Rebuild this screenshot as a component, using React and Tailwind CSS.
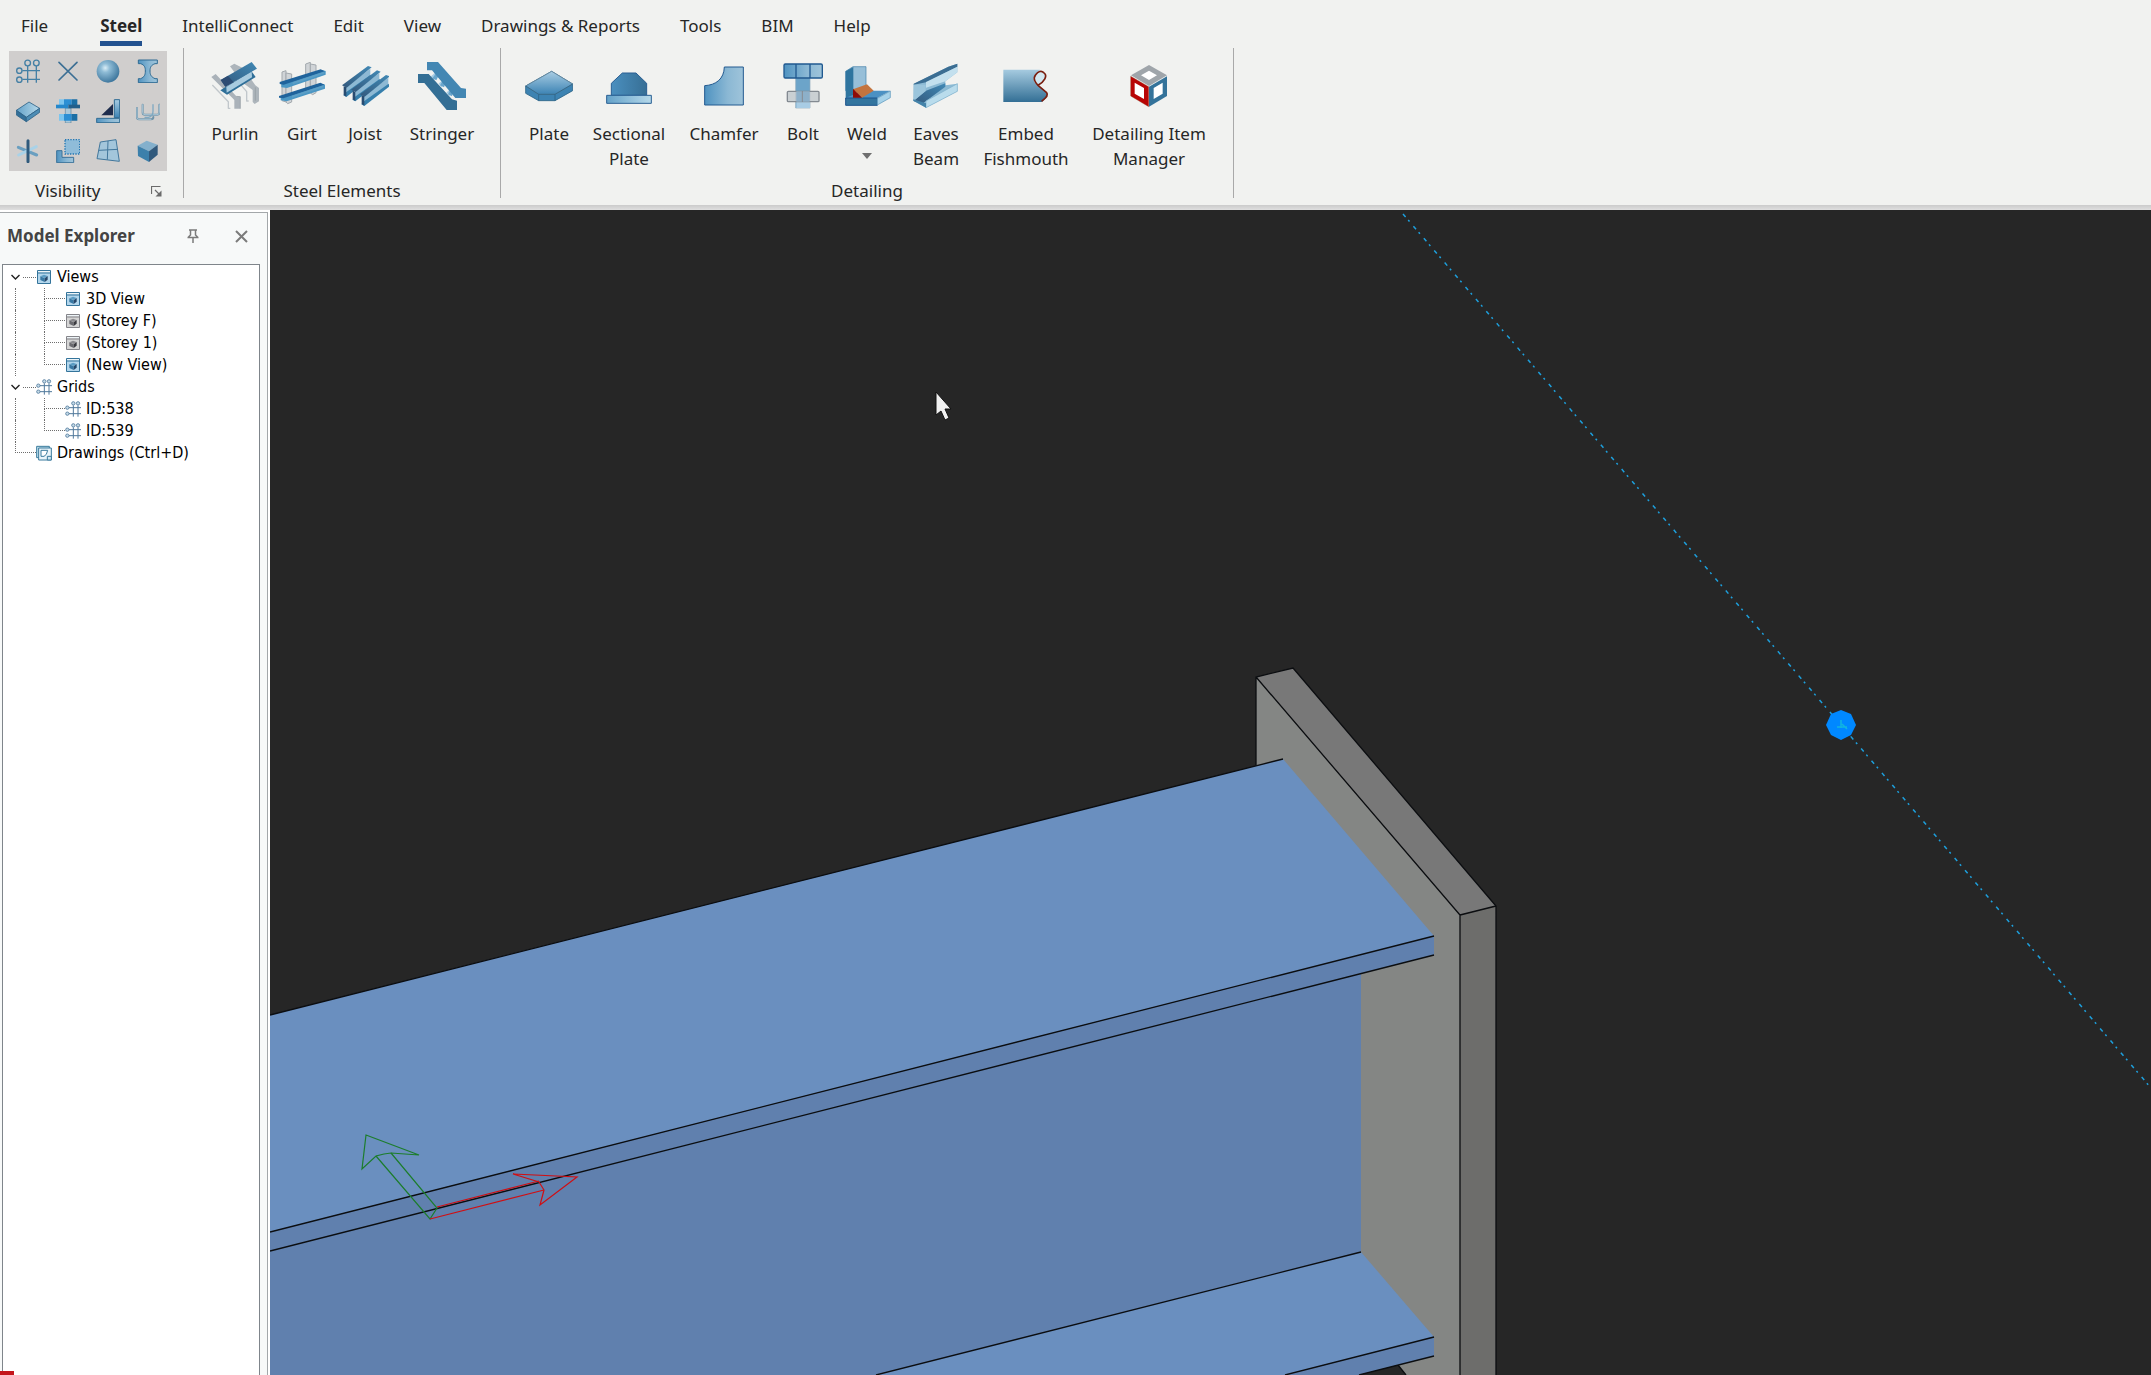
import React, { useState } from "react";

const UI_FONT = "font-['Noto_Sans','Open_Sans',sans-serif]";
const TREE_FONT = "font-['DejaVu_Sans_Condensed','Noto_Sans',sans-serif]";

function Gradients() {
  return (
    <svg width="0" height="0" className="absolute" aria-hidden="true">
      <defs>
        <linearGradient id="gDown" x1="0" y1="0" x2="0" y2="1">
          <stop offset="0" stopColor="#a9cde3" />
          <stop offset="1" stopColor="#3c83b4" />
        </linearGradient>
        <linearGradient id="gDeep" x1="0" y1="0" x2="0" y2="1">
          <stop offset="0" stopColor="#a6cbe0" />
          <stop offset="1" stopColor="#336f95" />
        </linearGradient>
        <linearGradient id="gLight" x1="0" y1="0" x2="1" y2="0">
          <stop offset="0" stopColor="#4f93c1" />
          <stop offset="0.6" stopColor="#8bb8d4" />
          <stop offset="1" stopColor="#9fc4da" />
        </linearGradient>
        <linearGradient id="gDark" x1="0" y1="0" x2="1" y2="0">
          <stop offset="0" stopColor="#4a8fbf" />
          <stop offset="1" stopColor="#376f95" />
        </linearGradient>
        <linearGradient id="gBeam" x1="0" y1="1" x2="1" y2="0">
          <stop offset="0" stopColor="#33597d" />
          <stop offset="1" stopColor="#4189b5" />
        </linearGradient>
        <linearGradient id="gPale" x1="0" y1="0" x2="1" y2="0">
          <stop offset="0" stopColor="#64a2c9" />
          <stop offset="1" stopColor="#b6d9ea" />
        </linearGradient>
        <radialGradient id="gBall" cx="0.38" cy="0.35" r="0.65">
          <stop offset="0" stopColor="#d9edf6" />
          <stop offset="0.3" stopColor="#8fbcd6" />
          <stop offset="1" stopColor="#41799f" />
        </radialGradient>
      </defs>
    </svg>
  );
}

function Icon({ box, className = "size-12", children }) {
  return (
    <svg viewBox={box} className={className} aria-hidden="true" strokeLinejoin="round">
      {children}
    </svg>
  );
}

/* ---------- visibility icons ---------- */

const visibilityIcons = [
  {
    name: "Grids",
    box: "48 41 72 72",
    art: (
      <g fill="none" stroke="#4580a5" strokeWidth="4">
        <circle cx="83" cy="53" r="8.500" />
        <circle cx="109" cy="53" r="8.500" />
        <circle cx="58" cy="76" r="8" />
        <circle cx="58" cy="103" r="8" />
        <path d="M83 62v50M109 62v50M67 76h53M67 102h53" />
      </g>
    ),
  },
  {
    name: "Points",
    box: "168 41 72 72",
    art: <path d="M177 51l54 53M231 51l-54 53" fill="none" stroke="#3c6f94" strokeWidth="5" strokeLinecap="round" />,
  },
  { name: "Solids", box: "288 41 72 72", art: <circle cx="324" cy="78" r="34" fill="url(#gBall)" /> },
  {
    name: "Sections",
    box: "411 41 72 72",
    art: (
      <path
        d="M418 44h57v11h-7c-11 4-15 10-15 22s4 18 15 23h7v12h-57v-12h7c11-5 14-11 14-23s-3-18-14-22h-7z"
        fill="url(#gLight)"
        stroke="#2f6b93"
        strokeWidth="3"
      />
    ),
  },
  {
    name: "Plates",
    box: "48 161 72 72",
    art: (
      <g stroke="#2f6387" strokeWidth="2.500">
        <path d="M49 195l38-25 32 19-40 27z" fill="url(#gPale)" />
        <path d="M49 195l30 21v13l-30-20z" fill="#33709a" />
        <path d="M79 216l40-27v12l-40 28z" fill="#4d8db5" />
      </g>
    ),
  },
  {
    name: "Bolts",
    box: "168 161 72 72",
    art: (
      <g>
        <path d="M196 188h17v45h-17z" fill="#a9c8da" stroke="#5f879f" strokeWidth="2" />
        <path d="M177 162h15v17h-15zM177 206h15v20h-15z" fill="#7cc5ee" />
        <path d="M192 162h23v17h-23zM192 206h23v20h-23z" fill="#2b8fd4" />
        <path d="M215 162h17v17h-17zM215 206h17v20h-17z" fill="#1b6fa5" />
        <path d="M168 178h37v11h-37z" fill="#2588cc" />
        <path d="M205 178h35v11h-35z" fill="#235f8a" />
      </g>
    ),
  },
  {
    name: "Welds",
    box: "288 161 72 72",
    art: (
      <g>
        <path d="M343 163h16v54h-16z" fill="url(#gDown)" stroke="#2f6b93" strokeWidth="3" />
        <path d="M290 219h69v13h-69z" fill="url(#gLight)" stroke="#2f6b93" strokeWidth="3" />
        <path d="M339 176v34h-35z" fill="#1f2d4d" />
      </g>
    ),
  },
  {
    name: "Connections",
    box: "408 161 72 72",
    art: (
      <g fill="none" strokeLinecap="round" strokeLinejoin="round">
        <path d="M411 188v28q0 6 6 6h36q7 0 7-6v-1" stroke="#6f93a9" strokeWidth="6" />
        <path d="M428 178v24q0 6 7 6h36q7 0 7-6v-24" stroke="#6f93a9" strokeWidth="6" />
        <path d="M411 188v28q0 6 6 6h36M428 178v24q0 6 7 6h36q7 0 7-6v-24" stroke="#b5d0de" strokeWidth="2.500" />
        <path d="M459 178v20q0 16-14 18h-10" stroke="#7fa9c2" strokeWidth="4" />
      </g>
    ),
  },
  {
    name: "Axes",
    box: "48 281 72 72",
    art: (
      <g strokeLinecap="round" strokeWidth="9">
        <path d="M55 306l55 23" stroke="#6a9fc0" />
        <path d="M56 329l53-25" stroke="#a9d2e8" />
        <path d="M84 286v63" stroke="#2f5a7c" />
      </g>
    ),
  },
  {
    name: "Clipping",
    box: "168 281 72 72",
    art: (
      <g>
        <path d="M195 283h44v43h-44z" fill="#8fbcd9" stroke="#2377b3" strokeWidth="4" strokeDasharray="4 4" />
        <path d="M170 316h16v20h35v16h-51z" fill="url(#gLight)" stroke="#3b7299" strokeWidth="3" />
      </g>
    ),
  },
  {
    name: "Work planes",
    box: "288 281 72 72",
    art: (
      <g stroke="#42779c" strokeWidth="3">
        <path d="M301 290l47-7 10 65-67-8z" fill="#a3c6db" />
        <path d="M324 287l-2 56M296 315l58-3" fill="none" />
      </g>
    ),
  },
  {
    name: "Blocks",
    box: "411 281 72 72",
    art: (
      <g>
        <path d="M416 301l27-15 33 12-26 20z" fill="#84b0cc" />
        <path d="M416 301l34 17v32l-33-18z" fill="#3c80ab" />
        <path d="M450 318l26-20v30l-26 22z" fill="#31597c" />
      </g>
    ),
  },
];

/* ---------- ribbon commands ---------- */

const steelElements = [
  {
    label: ["Purlin"],
    width: "w-[68px]",
    box: "33 36 144 144",
    art: (
      <g>
        <path d="M34 81l13-9 62 67 12 1v36h-18v-26l-5-5z" fill="#aab2b9" />
        <path d="M90 49l13-8 27 14 36 51 11 8v40l-13 8-6-6v-36L125 96z" fill="#adb5bb" />
        <path d="M37 105l48 50v20h6M104 83l36 42v28h6" fill="none" stroke="#c1c7cb" strokeWidth="4" />
        <path d="M109 139l12 1v36M166 112v40" fill="none" stroke="#8f989f" strokeWidth="2" />
        <path d="M61 121l93-58 13 18-86 53z" fill="#2f6f98" />
        <path d="M79 111l76-48 1 19-76 46z" fill="#a9cbdf" />
        <path d="M62 90l93-54 16 20-95 54z" fill="url(#gBeam)" />
        <path d="M62 90l22-13 17 20-25 13z" fill="#2d4c73" />
      </g>
    ),
  },
  {
    label: ["Girt"],
    width: "w-[66px]",
    box: "234 36 144 144",
    art: (
      <g>
        <g fill="#d0d4d7" stroke="#a3a9ae" strokeWidth="3">
          <path d="M246 66l12-4v94l-12-4z" />
          <path d="M258 69l17 3v84l-12 5-5-5z" />
          <path d="M317 42l14-5v92l-14-4z" />
          <path d="M331 42l17 3v83l-10 6-7-5z" />
        </g>
        <path d="M244 102l122-42 11 3v11l-116 40-17-2z" fill="#4b97c4" />
        <path d="M239 96l123-38 12 6-123 40-12-2z" fill="#1f639c" />
        <path d="M278 97l94-32v6l-94 32z" fill="#5d9fc6" />
        <path d="M242 143l122-42 11 3v12l-115 38-18-3z" fill="#4b97c4" />
        <path d="M237 138l124-40 13 6-124 41-13-2z" fill="#1f639c" />
        <path d="M276 137l94-31v6l-94 31z" fill="#5d9fc6" />
      </g>
    ),
  },
  {
    label: ["Joist"],
    width: "w-[60px]",
    box: "423 36 144 144",
    art: (
      <g>
        {[
          [0, 0],
          [27, 13],
          [54, 27],
        ].map(([x, y]) => (
          <g key={x} transform={`translate(${x} ${y})`}>
            <path d="M438 110l73-54v25l-72 57z" fill="#8db9d4" />
            <path d="M430 136l8-9 74-53 3 8-76 59z" fill="#367fac" />
            <path d="M431 135v-26l8 3v28z" fill="#284c71" />
            <path d="M426 106l78-58 11 4-75 61z" fill="url(#gBeam)" />
          </g>
        ))}
      </g>
    ),
  },
  {
    label: ["Stringer"],
    width: "w-[94px]",
    box: "651 36 144 144",
    art: (
      <g>
        <path d="M694 85l24-22M717 106l22-17M741 133l24-22" stroke="#a7cde4" strokeWidth="14" />
        <path d="M694 85l12-16 8 6-8 16M717 106l9-15 9 5-6 16M741 133l8-17 8 5-4 18" fill="#6aa6cc" />
        <path d="M678 36h33l69 78 15 2v28h-32L693 61h-15z" fill="#4387b3" />
        <path d="M651 72h32l70 76 15 4v28h-31l-67-81h-19z" fill="#346f95" />
      </g>
    ),
  },
];

const detailing = [
  {
    label: ["Plate"],
    width: "w-[52px]",
    box: "45 36 144 144",
    art: (
      <g stroke="#2d6487" strokeWidth="2.500">
        <path d="M47 108l78-44 63 38v20l-53 30H86l-39-22z" fill="#3d83b2" />
        <path d="M47 108l78-44 63 38-53 31H86z" fill="url(#gDown)" stroke="#64869a" />
        <path d="M47 108l39 25h49l53-31M86 133v19M135 133v19" fill="none" />
      </g>
    ),
  },
  {
    label: ["Sectional", "Plate"],
    width: "w-[108px]",
    box: "285 36 144 144",
    art: (
      <g stroke="#2a5f93" strokeWidth="3">
        <path d="M304 136v-36l33-31h41l32 31v36z" fill="url(#gDark)" />
        <path d="M290 136h134v24H290z" fill="url(#gPale)" />
      </g>
    ),
  },
  {
    label: ["Chamfer"],
    width: "w-[82px]",
    box: "570 36 144 144",
    art: (
      <path d="M584 165v-58c34-2 58-20 59-56h57v114z" fill="url(#gLight)" stroke="#235a90" strokeWidth="3" />
    ),
  },
  {
    label: ["Bolt"],
    width: "w-[76px]",
    box: "807 36 144 144",
    art: (
      <g>
        <path d="M857 84h43v90h-43z" fill="#6ca4c9" stroke="#8faabd" strokeWidth="2" />
        <path d="M859 155h41v19h-41z" fill="#a8cce4" />
        <rect x="822" y="42" width="115" height="42" rx="4" fill="url(#gLight)" stroke="#205990" strokeWidth="4" />
        <path d="M858 42v42M900 42v42" stroke="#205990" strokeWidth="4" />
        <rect x="832" y="124" width="95" height="31" rx="3" fill="#c0c7cc" fillOpacity="0.8" stroke="#838a91" strokeWidth="4" />
        <path d="M859 124h17v31h-17zM878 124h21v31h-21z" fill="#8db0c9" />
        <path d="M877 124v31" stroke="#838a91" strokeWidth="3" />
      </g>
    ),
  },
  {
    label: ["Weld"],
    width: "w-[52px]",
    menu: true,
    box: "39 36 144 144",
    art: (
      <g>
        <path d="M47 64l22-14h39v72H47z" fill="#97bfd8" stroke="#3f7fa8" strokeWidth="2" />
        <path d="M47 64l23-13v90l-23 5z" fill="#2f759f" />
        <path d="M47 144l50-22h84l-39 22z" fill="#4b91c3" />
        <path d="M47 144h95v22H47z" fill="#33759f" stroke="#1d558d" strokeWidth="3" />
        <path d="M142 145l39-22v20l-39 22z" fill="#a6d2e9" stroke="#5593b8" strokeWidth="2" />
        <path d="M69 118l42-15 20 19-35 21z" fill="#c4743e" />
        <path d="M69 116l27 27H69z" fill="#8f0c07" />
      </g>
    ),
  },
  {
    label: ["Eaves", "Beam"],
    width: "w-[86px]",
    box: "246 36 144 144",
    art: (
      <g>
        <path d="M251 102l104-52 27-9v26l-36 27v12l36-5v23l-94 49-38-21z" fill="#8cbad4" />
        <path d="M250 153l38-31 58-22v10l-59 44-8 6z" fill="url(#gBeam)" />
        <path d="M251 101L355 50l27-9v9l-90 46-41 8z" fill="#3b6e93" />
        <path d="M288 96l94-46v17l-36 27-58 19z" fill="#c3e0ee" />
        <path d="M251 104h36v19l-36 30z" fill="#9bc5dc" />
        <path d="M288 153l94-52v23l-94 49z" fill="#b9dcec" stroke="#7fb0cb" strokeWidth="2" />
        <path d="M250 148l38 12v13l-38-21z" fill="#4483a9" />
      </g>
    ),
  },
  {
    label: ["Embed", "Fishmouth"],
    width: "w-[94px]",
    box: "516 36 144 144",
    art: (
      <g>
        <path d="M520 59h110c-16 14-24 26-16 38l37 31c4 10-3 18-16 28H520z" fill="url(#gDeep)" />
        <path d="M632 62c-15 9-24 22-17 34l9 9c20-6 28-25 18-37z" fill="#d3e8f1" />
        <path
          d="M624 106c18-10 31-29 17-38-7-8-17-3-24 6-10 13 0 24 7 32l26 22c7 9-4 16-15 26"
          fill="none"
          stroke="#7a1f10"
          strokeWidth="5"
        />
      </g>
    ),
  },
  {
    label: ["Detailing Item", "Manager"],
    width: "w-[152px]",
    box: "885 36 144 144",
    art: (
      <g>
        <path d="M957 45l54 31-54 32-54-32z" fill="#9fa5aa" />
        <path d="M902 79l54 31v60l-54-32z" fill="#b80505" stroke="#8a4c2c" strokeWidth="1" />
        <path d="M1011 79l-54 31v60l54-32z" fill="#34739a" />
        <path d="M957 62l-24 14 24 14 24-14zM914 98v33l28 16v-33zM998 98l-27 16v33l27-16z" fill="#ffffff" />
      </g>
    ),
  },
];

function RibbonButton({ item }) {
  return (
    <button type="button" className={`flex shrink-0 flex-col items-center pt-[14px] ${item.width}`}>
      <Icon box={item.box}>{item.art}</Icon>
      <span className="mt-[11px] whitespace-nowrap leading-[25px]">
        {item.label.map((line) => (
          <span key={line} className="block">
            {line}
          </span>
        ))}
      </span>
      {item.menu && (
        <svg viewBox="0 0 10 6" className="mt-[7px] h-[6px] w-[10px]" aria-hidden="true">
          <path d="M0 0h10L5 6z" fill="#6f6f6f" />
        </svg>
      )}
    </button>
  );
}

function RibbonGroup({ title, items, className }) {
  return (
    <section aria-label={title} className="flex flex-col justify-between border-r border-[#a9a9a9]">
      <div className={`flex items-start ${className}`}>
        {items.map((item) => (
          <RibbonButton key={item.label[0]} item={item} />
        ))}
      </div>
      <h2 className="text-center leading-[14px]">{title}</h2>
    </section>
  );
}

const tabs = ["File", "Steel", "IntelliConnect", "Edit", "View", "Drawings & Reports", "Tools", "BIM", "Help"];

function Ribbon() {
  const [active, setActive] = useState("Steel");
  return (
    <header className={`bg-[#f1f2f0] text-[17px] text-[#262626] ${UI_FONT}`}>
      <nav className="flex h-12 items-start pl-px" aria-label="Ribbon tabs">
        {tabs.map((tab) => (
          <button
            key={tab}
            type="button"
            aria-pressed={active === tab}
            onClick={() => setActive(tab)}
            className={active === tab ? "whitespace-nowrap pl-8 pr-5 pt-[11px] font-bold" : "whitespace-nowrap px-5 pt-[11px]"}
          >
            <span className={active === tab ? "block border-b-[5px] border-[#22528f] leading-[30px]" : "block leading-[30px]"}>
              {tab}
            </span>
          </button>
        ))}
      </nav>
      <div className="flex h-[157px] items-stretch pb-[7px]">
        <section aria-label="Visibility" className="flex flex-col justify-between border-r border-[#a9a9a9] pl-[9px] pr-4 pt-[3px]">
          <div className="grid w-[158px] grid-cols-[repeat(4,40px)] justify-center bg-[#d0cecd]">
            {visibilityIcons.map((icon) => (
              <button key={icon.name} type="button" aria-label={icon.name} className="flex h-10 items-center justify-center">
                <Icon box={icon.box} className="size-6">
                  {icon.art}
                </Icon>
              </button>
            ))}
          </div>
          <div className="flex items-center justify-between pl-[26px] pr-[5px] leading-[14px]">
            <h2>Visibility</h2>
            <button type="button" aria-label="Visibility options">
              <svg viewBox="0 0 11 11" className="size-[11px]" fill="none" stroke="#6b6b6b" aria-hidden="true">
                <path d="M0.500 8V0.500H9.500M4 4l5 5" strokeWidth="1.200" />
                <path d="M10.500 4.500v6h-6z" fill="#6b6b6b" stroke="none" />
              </svg>
            </button>
          </div>
        </section>
        <RibbonGroup title="Steel Elements" items={steelElements} className="pl-[17px] pr-[11px]" />
        <RibbonGroup title="Detailing" items={detailing} className="pl-[22px] pr-2" />
      </div>
      <div className="h-[5px] bg-linear-to-b from-[#cbcbcb] to-[#dfdfdf]" />
    </header>
  );
}

/* ---------- model explorer ---------- */

function ViewIcon({ muted }) {
  const edge = muted ? "#85858a" : "#34749b";
  return (
    <svg viewBox="0 0 48 48" className="size-4 shrink-0" aria-hidden="true">
      <path d="M4.500 4.500h39v39h-39z" fill={muted ? "#d5d5d5" : "#b3d6ec"} stroke={edge} strokeWidth="3" />
      <path d="M6 6h36v4H6z" fill="#eef5f8" />
      <path d="M4 12h40" stroke={edge} strokeWidth="3" />
      <path d="M13 22l11-5 11 4-9 6z" fill={muted ? "#8b8b8f" : "#5c9dc4"} />
      <path d="M13 22l13 6v11l-13-6z" fill={muted ? "#6b6b70" : "#3878a3"} />
      <path d="M26 28l9-7v11l-9 7z" fill={muted ? "#3b3b40" : "#27486b"} />
    </svg>
  );
}

function GridIcon() {
  return (
    <svg viewBox="0 0 48 48" className="size-4 shrink-0" fill="none" stroke="#51799c" strokeWidth="3" aria-hidden="true">
      <path d="M25 13v34M39 13v34M12 20h36M12 38h36" />
      <g fill="#c6dbe8" strokeWidth="2.500">
        <circle cx="25" cy="7" r="5" />
        <circle cx="39" cy="7" r="5" />
        <circle cx="7" cy="20" r="5" />
        <circle cx="7" cy="38" r="5" />
      </g>
    </svg>
  );
}

function DrawingIcon() {
  return (
    <svg viewBox="0 0 48 48" className="size-4 shrink-0" fill="#eaf5fa" stroke="#3b7b9d" strokeWidth="3" aria-hidden="true">
      <path d="M2 4h38v34H2z" fill="#bfe0ee" />
      <path d="M8 9h38v36H8z" />
      <path d="M15 16h20l-4 12-7 6h-9z" fill="#ffffff" />
      <path d="M34 34h12v11H34z" fill="#d5eaf3" />
    </svg>
  );
}

const treeRows = [
  { label: "Views", root: true, icon: <ViewIcon /> },
  { label: "3D View", icon: <ViewIcon />, trunk: true },
  { label: "(Storey F)", icon: <ViewIcon muted />, trunk: true },
  { label: "(Storey 1)", icon: <ViewIcon muted />, trunk: true },
  { label: "(New View)", icon: <ViewIcon />, trunk: true, last: true },
  { label: "Grids", root: true, icon: <GridIcon /> },
  { label: "ID:538", icon: <GridIcon />, trunk: true },
  { label: "ID:539", icon: <GridIcon />, trunk: true, last: true },
  { label: "Drawings (Ctrl+D)", leaf: true, last: true, icon: <DrawingIcon /> },
];

function Elbow({ last }) {
  return (
    <span className="flex h-full w-[21px] flex-col">
      <span className="h-1/2 border-b border-l border-dotted border-[#6e6e6e]" />
      <span className={last ? "h-1/2" : "h-1/2 border-l border-dotted border-[#6e6e6e]"} />
    </span>
  );
}

function TreeRow({ row }) {
  return (
    <li role="treeitem" aria-selected="false" className="flex h-[22px] items-center">
      {row.root ? (
        <>
          <button type="button" aria-label={`Collapse ${row.label}`} className="flex w-5 justify-center pl-1">
            <svg viewBox="0 0 9 6" className="h-[6px] w-[9px]" fill="none" stroke="#222222" strokeWidth="1.400" aria-hidden="true">
              <path d="M0.500 1l4 4 4-4" />
            </svg>
          </button>
          <span className="w-[13px] border-t border-dotted border-[#6e6e6e]" />
        </>
      ) : (
        <>
          <span className="w-3" />
          {row.trunk && <span className="h-full w-[29px] border-l border-dotted border-[#6e6e6e]" />}
          <Elbow last={row.last} />
        </>
      )}
      {row.icon}
      <span className="ml-[5px] whitespace-nowrap">{row.label}</span>
    </li>
  );
}

function ModelExplorer() {
  return (
    <aside className="mt-[2px] flex w-[268px] shrink-0 flex-col border-r border-t border-[#a3a7aa] bg-[#f7f9f9]">
      <div className="flex h-[51px] shrink-0 items-center pb-[5px] pl-[7px] pr-[19px]">
        <h2 className={`grow text-[17px] font-bold text-[#444444] ${UI_FONT}`}>Model Explorer</h2>
        <button type="button" aria-label="Pin panel" className="mr-9">
          <svg viewBox="0 0 12 14" className="h-[14px] w-3" fill="none" stroke="#7b7b7b" strokeWidth="1.500" aria-hidden="true">
            <path d="M2 1h8M3.500 1v5L1.500 8M8.500 1v5l2 2M0.500 8.500h11M6 8.500V14" />
          </svg>
        </button>
        <button type="button" aria-label="Close panel">
          <svg viewBox="0 0 13 13" className="size-[13px]" fill="none" stroke="#7b7b7b" strokeWidth="2" aria-hidden="true">
            <path d="M1 1l11 11M12 1L1 12" />
          </svg>
        </button>
      </div>
      <ul
        role="tree"
        className={`ml-[2px] mr-[7px] grow border border-b-0 border-[#7f858b] bg-white pt-px text-[16px] text-black ${TREE_FONT}`}
      >
        {treeRows.map((row) => (
          <TreeRow key={row.label} row={row} />
        ))}
      </ul>
      <div className="-mt-1 h-1 w-[14px] bg-[#c4161c]" />
    </aside>
  );
}

/* ---------- 3D viewport ---------- */

function Viewport() {
  return (
    <main className="ml-[2px] min-w-0 grow bg-[#262626]">
      <svg viewBox="270 210 1881 1165" preserveAspectRatio="xMinYMin slice" className="block size-full" role="img" aria-label="3D view of a beam with an end plate">
        <path d="M1256 677L1460 915V1375H1405L1256 1195z" fill="#848684" />
        <path d="M1256 677L1293 668L1496 906L1460 915z" fill="#787878" />
        <path d="M1460 915L1496 906V1375H1460z" fill="#6d6d6b" />
        <path d="M270 1232L1361 960V1260L1285 1375H270z" fill="#6080ae" />
        <path d="M876 1375L1361 1252L1434 1337L1285 1375z" fill="#6a8fbf" />
        <path d="M1285 1375L1434 1337V1356L1359 1375z" fill="#6080ae" />
        <path d="M1359 1375L1398 1365L1406 1375z" fill="#262626" />
        <path d="M270 1015L1283 759L1434 936L270 1232z" fill="#6a8fbf" />
        <path d="M270 1232L1434 936V955L270 1251z" fill="#6080ae" />
        <g fill="none" stroke="#0b0d10" strokeWidth="1.300">
          <path d="M1256 765V677L1293 668L1496 906V1375M1256 677L1460 915V1375M1460 915L1496 906" />
          <path d="M270 1015L1283 759M270 1232L1434 936M270 1251L1434 955" />
          <path d="M876 1375L1361 1252M1285 1375L1434 1337M1359 1375L1434 1356M1398 1365L1406 1375" />
        </g>
        <g fill="none" stroke="#1c7d2c" strokeWidth="1.200">
          <path d="M366 1135L419 1155L391 1153L384 1154L376 1156L362 1169z" />
          <path d="M376 1156L430 1219L437 1208L391 1153" />
        </g>
        <g fill="none" stroke="#cf0f14" strokeWidth="1.200">
          <path d="M513 1174L577 1177L540 1205L544 1190L539 1182z" />
          <path d="M430 1219L544 1190M437 1207L539 1181" />
        </g>
        <path d="M1403 214L1841 725L2151 1088" fill="none" stroke="#1d9fdc" strokeWidth="1.500" strokeDasharray="4 4 2 6" />
        <path d="M1841 710l10 4 5 11-5 10-10 5-10-5-5-10 5-11z" fill="#0088ff" />
        <path d="M1841 720v8M1837 727h10M1842 724l5 5" fill="none" stroke="#10b5e0" strokeWidth="1.500" />
        <path d="M936 392v23l5-4 4 9 4-2-4-9h6z" fill="#f0f0f0" stroke="#111111" strokeWidth="1" />
      </svg>
    </main>
  );
}

export default function App() {
  return (
    <div className="flex h-screen flex-col overflow-hidden bg-white">
      <Gradients />
      <Ribbon />
      <div className="flex min-h-0 grow">
        <ModelExplorer />
        <Viewport />
      </div>
    </div>
  );
}
